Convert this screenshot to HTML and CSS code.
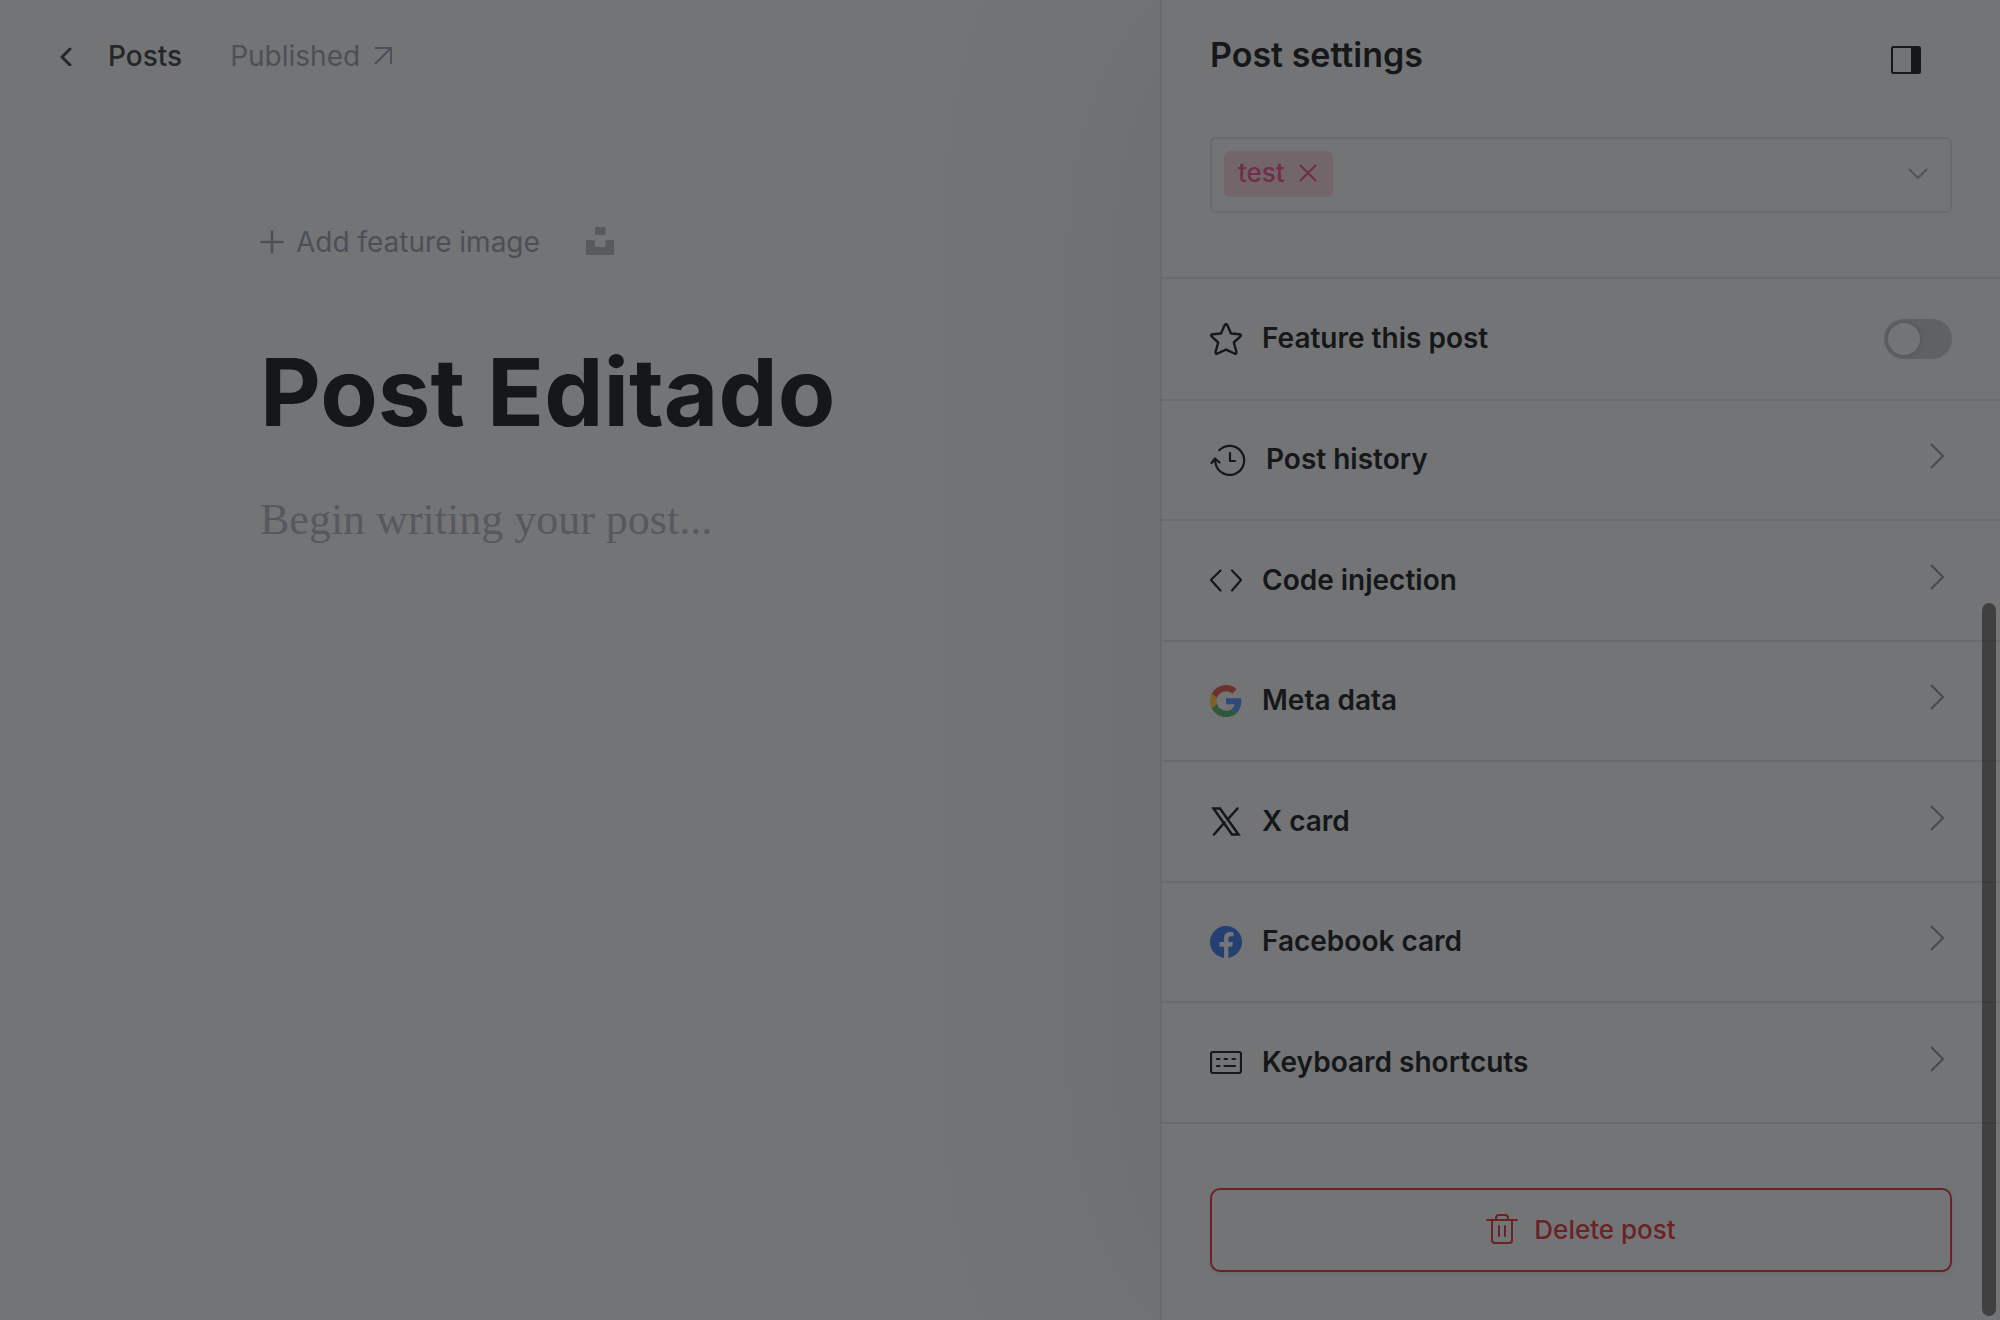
FILE: index.html
```html
<!DOCTYPE html>
<html lang="en">
<head>
<meta charset="utf-8">
<meta name="viewport" content="width=device-width, initial-scale=1">
<title>Post Editado</title>
<link rel="stylesheet" href="styles.css">
</head>
<body class="app">
<main class="editor">
  <header class="editor-bar">
    <a class="back" href="#posts">
      <svg width="12" height="20" viewBox="0 0 12 20" fill="none" stroke="currentColor" stroke-width="3" stroke-linecap="round" stroke-linejoin="round" aria-hidden="true"><path d="M10 3 2 11l8 8"/></svg>
      <span>Posts</span>
    </a>
    <a class="status" href="#published">
      <span>Published</span>
      <svg width="18" height="18" viewBox="0 0 18 18" fill="none" stroke="currentColor" stroke-width="1.800" aria-hidden="true"><path d="M1 17 17 1M1 1h16v16"/></svg>
    </a>
  </header>
  <form class="canvas">
    <div class="feature">
      <button class="feature-add" type="button">
        <svg width="24" height="24" viewBox="0 0 24 24" fill="none" stroke="currentColor" stroke-width="2.500" stroke-linecap="round" aria-hidden="true"><path d="M12 1.500v21M1.500 12h21"/></svg>
        <span>Add feature image</span>
      </button>
      <button class="unsplash" type="button" aria-label="Unsplash">
        <svg width="28" height="28" viewBox="0 0 28 28" fill="currentColor" aria-hidden="true"><path d="M9 0h10.500v8H9zM0 13h9v7h10.500v-7H28v15H0z"/></svg>
      </button>
    </div>
    <input class="title" type="text" value="Post Editado" aria-label="Post title">
    <textarea class="content" rows="2" placeholder="Begin writing your post..." aria-label="Post content"></textarea>
  </form>
</main>
<aside class="settings">
  <header class="settings-head">
    <h2 class="settings-title">Post settings</h2>
    <button class="panel-toggle" type="button" aria-label="Toggle settings">
      <svg width="30" height="28" viewBox="0 0 30 28" aria-hidden="true"><rect x="1" y="1" width="28" height="26" rx="1.500" fill="none" stroke="currentColor" stroke-width="2"/><path d="M20 1h9v26h-9z" fill="currentColor"/></svg>
    </button>
  </header>
  <div class="tags">
    <button class="tag" type="button">test
      <svg width="18" height="18" viewBox="0 0 18 18" fill="none" stroke="currentColor" stroke-width="2" stroke-linecap="round" aria-hidden="true"><path d="m1.500 1.500 15 15M16.500 1.500l-15 15"/></svg>
    </button>
    <input class="tags-input" type="text" aria-label="Tags">
    <button class="tags-open" type="button" aria-label="Show tags">
      <svg width="20" height="12" viewBox="0 0 20 12" fill="none" stroke="currentColor" stroke-width="2" aria-hidden="true"><path d="m1 1 9 9 9-9"/></svg>
    </button>
  </div>
  <div class="rows">
    <label class="row">
      <svg width="32" height="32" viewBox="0 0 32 32" fill="none" stroke="currentColor" stroke-width="2.400" stroke-linejoin="round" aria-hidden="true"><path d="M14.700 2.100q1.300-2.100 2.600 0L21 10.500l8.500.7q2.300.6.700 2.400l-6.400 5.900 2.600 9.300q.2 2.500-2 1.700L16 26.600l-8.400 3.900q-2.200.8-2-1.700l2.600-9.300-6.400-5.900q-1.600-1.800.7-2.400l8.500-.7z"/></svg>
      <span class="row-label">Feature this post</span>
      <input class="switch" type="checkbox" role="switch">
    </label>
    <button class="row" type="button">
      <svg width="36" height="32" viewBox="0 0 36 32" fill="none" stroke="currentColor" stroke-width="2.200" stroke-linecap="round" stroke-linejoin="round" aria-hidden="true"><path d="M9.300 6.200A14.500 14.500 0 1 1 5.500 19.500L5 14.500M1.500 19 5 14.500l4.500 4M20 9v8h5"/></svg>
      <span class="row-label">Post history</span>
      <svg class="chevron" width="14" height="26" viewBox="0 0 14 26" aria-hidden="true"><path d="m1 1 12 12L1 25"/></svg>
    </button>
    <button class="row" type="button">
      <svg width="32" height="32" viewBox="0 0 32 32" fill="none" stroke="currentColor" stroke-width="2.200" stroke-linecap="round" stroke-linejoin="round" aria-hidden="true"><path d="M10.500 5.500 1.600 14.200q-.8.800 0 1.600L10.500 25.500M22 5.500l8.400 8.700q.8.800 0 1.600L22 25.500"/></svg>
      <span class="row-label">Code injection</span>
      <svg class="chevron" width="14" height="26" viewBox="0 0 14 26" aria-hidden="true"><path d="m1 1 12 12L1 25"/></svg>
    </button>
    <button class="row" type="button">
      <svg width="32" height="32" viewBox="0 0 48 48" aria-hidden="true"><path fill="#6b322e" d="M24 9.500c3.540 0 6.710 1.220 9.210 3.600l6.850-6.850C35.900 2.380 30.470 0 24 0 14.620 0 6.510 5.380 2.560 13.220l7.980 6.190C12.430 13.720 17.740 9.500 24 9.500z"/><path fill="#2f4a78" d="M47 24.550c0-1.570-.15-3.090-.38-4.550H24v9.020h12.940c-.58 2.960-2.260 5.480-4.780 7.180l7.730 6C44.400 38.020 47 31.840 47 24.550z"/><path fill="#7c6126" d="M10.530 28.590c-.48-1.450-.76-2.990-.76-4.590s.27-3.140.76-4.590l-7.980-6.190C.92 16.460 0 20.120 0 24s.92 7.540 2.560 10.780l7.970-6.190z"/><path fill="#31563a" d="M24 48c6.480 0 11.930-2.130 15.890-5.810l-7.730-6c-2.150 1.450-4.920 2.300-8.160 2.300-6.260 0-11.570-4.220-13.470-9.910l-7.980 6.190C6.510 42.620 14.620 48 24 48z"/></svg>
      <span class="row-label">Meta data</span>
      <svg class="chevron" width="14" height="26" viewBox="0 0 14 26" aria-hidden="true"><path d="m1 1 12 12L1 25"/></svg>
    </button>
    <button class="row" type="button">
      <svg width="32" height="32" viewBox="0 0 32 32" fill="none" stroke="currentColor" stroke-width="2.500" stroke-linecap="round" aria-hidden="true"><path d="M4 28.500 14.500 16.500M27.500 2.500 17.500 13.500"/><path stroke-linejoin="miter" d="M3.500 2.500h6.500L28.500 28.500H22z"/></svg>
      <span class="row-label">X card</span>
      <svg class="chevron" width="14" height="26" viewBox="0 0 14 26" aria-hidden="true"><path d="m1 1 12 12L1 25"/></svg>
    </button>
    <button class="row" type="button">
      <svg width="32" height="32" viewBox="0 0 32 32" aria-hidden="true"><circle cx="16" cy="16" r="16" fill="#243f70"/><path fill="#737476" d="M14 32V20.700H9.500V16H14v-3.500C14 8.300 16.400 6 20.200 6c1.100 0 2.300.2 3.300.4v3.900h-2.300c-2 0-2.800 1.100-2.800 2.500V16H23l-.8 4.700h-3.800V32z"/></svg>
      <span class="row-label">Facebook card</span>
      <svg class="chevron" width="14" height="26" viewBox="0 0 14 26" aria-hidden="true"><path d="m1 1 12 12L1 25"/></svg>
    </button>
    <button class="row" type="button">
      <svg width="32" height="32" viewBox="0 0 32 32" fill="none" stroke="currentColor" stroke-width="2.200" stroke-linecap="round" aria-hidden="true"><rect x="1" y="5" width="30" height="21" rx="2"/><path d="M7 12h2.500M14.500 12H17M22.500 12H25M7 19h2.500M14.500 19H25"/></svg>
      <span class="row-label">Keyboard shortcuts</span>
      <svg class="chevron" width="14" height="26" viewBox="0 0 14 26" aria-hidden="true"><path d="m1 1 12 12L1 25"/></svg>
    </button>
  </div>
  <button class="delete" type="button">
    <svg width="32" height="32" viewBox="0 0 32 32" fill="none" stroke="currentColor" stroke-width="2" stroke-linecap="round" stroke-linejoin="round" aria-hidden="true"><path d="M1 6h30M6 6v20q0 3 3 3h14q3 0 3-3V6M10 6V4q0-3 3-3h6q3 0 3 3v2M13 12v10M19 12v10"/></svg>
    <span>Delete post</span>
  </button>
  <div class="scroll-thumb" aria-hidden="true"></div>
</aside>
</body>
</html>
```
FILE: styles.css
```css
:root {
  --surface: #737476;
  --line: #6a6b6d;
  --ink: #151719;
  --muted: #4b5056;
  --danger: #6b2225;
}

* {
  box-sizing: border-box;
}

.app {
  display: flex;
  min-height: 100vh;
  margin: 0;
  background: var(--surface);
  color: var(--ink);
  font-family: Inter, "Liberation Sans", sans-serif;
  font-size: 28px;
  line-height: 36px;
}

svg {
  display: block;
  flex: none;
}

button,
input,
textarea {
  margin: 0;
  padding: 0;
  border: 0;
  background: none;
  color: inherit;
  font: inherit;
  outline: 0;
}

.editor {
  flex: 1;
  min-width: 0;
}

.editor-bar {
  display: flex;
  align-items: center;
  gap: 48px;
  height: 112px;
  padding-left: 60px;
}

.back,
.status {
  display: flex;
  align-items: center;
  text-decoration: none;
}

.back {
  gap: 36px;
  color: #242629;
  font-weight: 500;
}

.status {
  gap: 14px;
  color: var(--muted);
}

.canvas {
  padding: 112px 64px 0 260px;
}

.feature {
  display: flex;
  align-items: center;
  gap: 46px;
  height: 36px;
  color: var(--muted);
}

.feature-add {
  display: flex;
  align-items: center;
  gap: 12px;
}

.unsplash {
  padding-bottom: 2px;
  color: #575b5e;
}

.title {
  display: block;
  width: 100%;
  height: 120px;
  margin-top: 72px;
  font-size: 94px;
  font-weight: 700;
  line-height: 120px;
}

.content {
  display: block;
  width: 100%;
  margin-top: 36px;
  resize: none;
  font-family: Georgia, "Liberation Serif", serif;
  font-size: 44px;
  line-height: 64px;
}

.content::placeholder {
  color: #56595e;
  opacity: 1;
}

.settings {
  position: relative;
  flex: none;
  width: 42%;
  border-left: 2px solid var(--line);
  background: var(--surface);
  box-shadow: 0 0 280px rgba(0, 0, 0, 0.08);
}

.settings-head {
  display: flex;
  align-items: center;
  justify-content: space-between;
  height: 112px;
  padding: 0 79px 0 48px;
}

.settings-title {
  margin: 0;
  padding-bottom: 2px;
  font-size: 34px;
  font-weight: 600;
  line-height: 44px;
}

.panel-toggle {
  padding-top: 8px;
}

.tags {
  display: flex;
  align-items: center;
  height: 76px;
  margin: 25px 48px 64px;
  padding: 0 22px 2px 12px;
  border: 2px solid var(--line);
  border-radius: 6px;
}

.tag {
  display: flex;
  align-items: center;
  gap: 14px;
  height: 46px;
  padding: 0 16px 2px 14px;
  border-radius: 6px;
  background: #73666b;
  color: #702e48;
  font-size: 26px;
  font-weight: 500;
}

.tags-input {
  flex: 1;
  min-width: 0;
}

.tags-open {
  color: #505459;
}

.rows {
  display: grid;
  grid-template-rows: 122px repeat(3, 120px 121px);
  border-bottom: 2px solid var(--line);
}

.row {
  display: flex;
  align-items: center;
  gap: 20px;
  padding: 0 48px;
  border-top: 2px solid var(--line);
  font-weight: 600;
  text-align: left;
}

.row-label {
  flex: 1;
  padding-bottom: 2px;
}

.chevron {
  margin: 0 8px 8px 0;
  fill: none;
  stroke: #464b52;
  stroke-width: 2;
}

.switch {
  appearance: none;
  width: 68px;
  height: 40px;
  padding: 4px;
  border-radius: 20px;
  background: #5e6265;
}

.switch::before {
  content: "";
  display: block;
  width: 32px;
  height: 32px;
  border-radius: 50%;
  background: var(--surface);
  box-shadow: 0 0 6px rgba(0, 0, 0, 0.15);
}

.switch:checked::before {
  margin-left: auto;
}

.delete {
  display: flex;
  align-items: center;
  justify-content: center;
  gap: 16px;
  width: calc(100% - 96px);
  height: 84px;
  margin: 64px 48px 48px;
  border: 2px solid var(--danger);
  border-radius: 10px;
  color: var(--danger);
  font-size: 26px;
  font-weight: 500;
  box-shadow: 0 2px 4px rgba(0, 0, 0, 0.06);
}

.scroll-thumb {
  position: absolute;
  right: 4px;
  bottom: 4px;
  width: 14px;
  height: 54%;
  border-radius: 7px;
  background: rgba(20, 20, 20, 0.540);
}
```
